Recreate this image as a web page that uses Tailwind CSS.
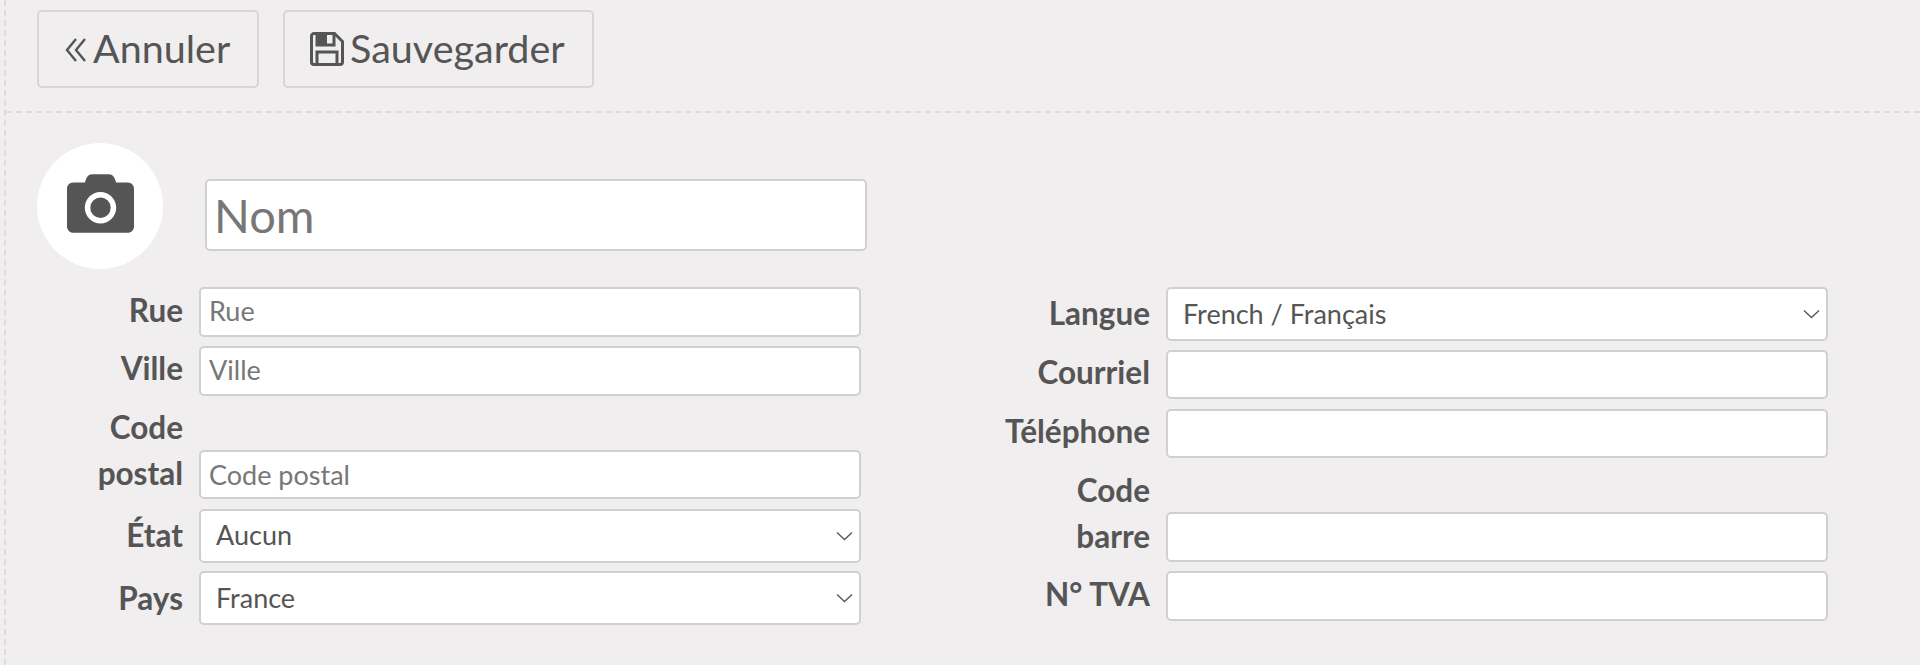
<!DOCTYPE html>
<html lang="fr">
<head>
<meta charset="utf-8">
<title>Contact</title>
<script src="https://cdn.jsdelivr.net/npm/@tailwindcss/browser@4"></script>
</head>
<body class="bg-[#f0eeef] text-[#555] font-['Lato','Noto_Sans',sans-serif] overflow-hidden">
<div class="ml-[4px] h-[665px] border-l-2 border-dashed border-[#dcdcdc]">
  <div class="h-[113px] border-b-2 border-dashed border-[#dcdcdc] pl-[31px] pt-[10px] flex gap-[24px]">
    <button class="h-[78px] w-[222px] flex items-center pl-[26px] pb-[3px] gap-[6px] rounded-[5px] border-2 border-[#d6d6d6] text-[39.5px]">
      <svg class="w-[22px] h-[24px] mt-[4px]" viewBox="0 0 22 24" fill="none" stroke="#555" stroke-width="2.400"><path d="M11 1 2 12l9 11M20 1l-9 11 9 11"/></svg>
      <span>Annuler</span>
    </button>
    <button class="h-[78px] w-[311px] flex items-center pl-[25px] pb-[3px] gap-[6px] rounded-[5px] border-2 border-[#d6d6d6] text-[39.5px]">
      <svg class="w-[34px] h-[34px] mt-[3px]" viewBox="0 0 34 34" fill="none" stroke="#555" stroke-width="3"><path d="M4 1.500h20.500L32.500 9.500V30a2.500 2.500 0 0 1-2.500 2.500H4A2.500 2.500 0 0 1 1.500 30V4A2.500 2.500 0 0 1 4 1.500Z"/><path d="M7 2v11h17V2"/><path d="M7 32V20h20v12"/><path d="M8 2h9v10H8Z" fill="#555" stroke="none"/></svg>
      <span>Sauvegarder</span>
    </button>
  </div>
  <div class="pl-[31px] pt-[30px] flex items-start">
    <div class="w-[126px] h-[126px] pb-[5px] rounded-full bg-white flex items-center justify-center">
      <svg class="w-[67px] h-[67px]" viewBox="0 0 512 512" fill="#555"><path d="M512 144v288c0 26.500-21.500 48-48 48H48c-26.500 0-48-21.500-48-48V144c0-26.500 21.500-48 48-48h88l12.300-32.900c7-18.700 24.900-31.100 44.900-31.100h125.500c20 0 37.900 12.400 44.900 31.100L376 96h88c26.500 0 48 21.500 48 48zM376 288c0-66.200-53.800-120-120-120s-120 53.800-120 120 53.800 120 120 120 120-53.800 120-120z"/><circle cx="256" cy="288" r="78"/></svg>
    </div>
    <input class="ml-[42px] mt-[36px] w-[662px] h-[72px] bg-white rounded-[5px] border-2 border-[#d0d0d0] px-[7px] text-[47px] placeholder:text-[#777]" placeholder="Nom">
  </div>
  <div class="pt-[18px] flex">
    <div class="w-[856px] flex flex-col gap-[9.500px] text-[31.5px] font-bold">
      <div class="flex items-center gap-[16px]"><div class="w-[177px] text-right leading-[40px] pb-[3px]">Rue</div><input class="w-[662px] h-[49.500px] bg-white rounded-[5px] border-2 border-[#d0d0d0] px-[8px] pb-[2px] text-[27px] font-normal placeholder:text-[#777]" placeholder="Rue"></div>
      <div class="flex items-center gap-[16px]"><div class="w-[177px] text-right leading-[40px] pb-[5px]">Ville</div><input class="w-[662px] h-[49.500px] bg-white rounded-[5px] border-2 border-[#d0d0d0] px-[8px] pb-[2px] text-[27px] font-normal placeholder:text-[#777]" placeholder="Ville"></div>
      <div class="-mt-[1px] flex items-end gap-[16px]"><div class="w-[177px] text-right leading-[46px] pb-[3px]">Code<br>postal</div><input class="w-[662px] h-[49.500px] bg-white rounded-[5px] border-2 border-[#d0d0d0] px-[8px] text-[27px] font-normal placeholder:text-[#777]" placeholder="Code postal"></div>
      <div class="-mb-[1px] flex items-center gap-[16px]"><div class="w-[177px] text-right leading-[47px]">État</div>
        <div class="relative w-[662px] h-[54px] bg-white rounded-[5px] border-2 border-[#d0d0d0] pl-[15px] flex items-center text-[27px] font-normal">Aucun<svg class="absolute right-[6px] top-[20px] w-[17px] h-[10px]" viewBox="0 0 17 10" fill="none" stroke="#555" stroke-width="1.300"><path d="M1 1.500 8.500 8.500 16 1.500"/></svg></div></div>
      <div class="flex items-center gap-[16px]"><div class="w-[177px] text-right leading-[47px]">Pays</div>
        <div class="relative w-[662px] h-[54px] bg-white rounded-[5px] border-2 border-[#d0d0d0] pl-[15px] flex items-center text-[27px] font-normal">France<svg class="absolute right-[6px] top-[20px] w-[17px] h-[10px]" viewBox="0 0 17 10" fill="none" stroke="#555" stroke-width="1.300"><path d="M1 1.500 8.500 8.500 16 1.500"/></svg></div></div>
    </div>
    <div class="w-[966px] flex flex-col gap-[9.500px] text-[31.5px] font-bold">
      <div class="-mb-[1px] flex items-center justify-end gap-[16px]"><div class="text-right leading-[45px] pb-[2px]">Langue</div>
        <div class="relative w-[662px] h-[54px] bg-white rounded-[5px] border-2 border-[#d0d0d0] pl-[15px] flex items-center text-[27px] font-normal">French / Français<svg class="absolute right-[6px] top-[20px] w-[17px] h-[10px]" viewBox="0 0 17 10" fill="none" stroke="#555" stroke-width="1.300"><path d="M1 1.500 8.500 8.500 16 1.500"/></svg></div></div>
      <div class="flex items-center justify-end gap-[16px]"><div class="text-right leading-[40px] pb-[5px]">Courriel</div><input class="w-[662px] h-[49.500px] bg-white rounded-[5px] border-2 border-[#d0d0d0]"></div>
      <div class="flex items-center justify-end gap-[16px]"><div class="text-right leading-[40px] pb-[5px]">Téléphone</div><input class="w-[662px] h-[49.500px] bg-white rounded-[5px] border-2 border-[#d0d0d0]"></div>
      <div class="-mt-[1px] flex items-end justify-end gap-[16px]"><div class="text-right leading-[46px] pb-[3px]">Code<br>barre</div><input class="w-[662px] h-[49.500px] bg-white rounded-[5px] border-2 border-[#d0d0d0]"></div>
      <div class="flex items-center justify-end gap-[16px]"><div class="text-right leading-[42px] pb-[3px]">N° TVA</div><input class="w-[662px] h-[49.500px] bg-white rounded-[5px] border-2 border-[#d0d0d0]"></div>
    </div>
  </div>
</div>
</body>
</html>
